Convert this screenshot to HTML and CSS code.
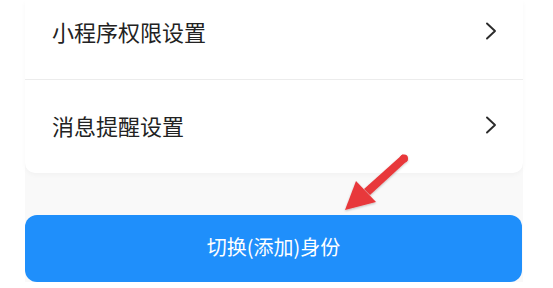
FILE: index.html
```html
<!DOCTYPE html>
<html lang="zh-CN">
<head>
<meta charset="utf-8">
<title>设置</title>
<link rel="stylesheet" href="styles.css">
</head>
<body>
<div class="screen">
  <div class="card">
    <div class="row row-first">
      <span class="label">小程序权限设置</span>
      <svg class="chev" width="12" height="18" viewBox="0 0 12 18"><path d="M2 1.5 L10 9 L2 16.5" fill="none" stroke="#2b2b2b" stroke-width="1.9" stroke-linecap="round" stroke-linejoin="round"/></svg>
    </div>
    <div class="row row-second">
      <span class="label">消息提醒设置</span>
      <svg class="chev" width="12" height="18" viewBox="0 0 12 18"><path d="M2 1.5 L10 9 L2 16.5" fill="none" stroke="#2b2b2b" stroke-width="1.9" stroke-linecap="round" stroke-linejoin="round"/></svg>
    </div>
  </div>
  <button class="switch-btn">切换(添加)身份</button>
</div>
<svg class="arrow" width="553" height="288" viewBox="0 0 553 288">
  <defs>
    <filter id="sh" x="-20%" y="-20%" width="140%" height="140%">
      <feDropShadow dx="0" dy="1" stdDeviation="1.2" flood-color="#000" flood-opacity="0.25"/>
    </filter>
  </defs>
  <g filter="url(#sh)" fill="#e8383a">
    <path d="M402.5 154.5 Q407.5 155.5 407.5 160.5 L370 195 L364 189 Z"/>
    <circle cx="404" cy="158.5" r="4"/>
    <polygon points="345,210 356,181 376,202"/>
  </g>
</svg>
</body>
</html>
```
FILE: styles.css
```css
html, body {
  margin: 0;
  padding: 0;
  background: #ffffff;
}
body {
  width: 553px;
  height: 288px;
  overflow: hidden;
  position: relative;
  font-family: "Noto Sans CJK SC", "Noto Sans", sans-serif;
}
.screen {
  width: 498px;
  margin-left: 25px;
  background: linear-gradient(#f3f3f3 0, #f9f9f9 60px);
  display: flex;
  flex-direction: column;
}
.card {
  background: #ffffff;
  border-radius: 0 0 10px 10px;
  box-shadow: 0 2px 5px rgba(0, 0, 0, 0.03);
  display: flex;
  flex-direction: column;
}
.row {
  height: 93px;
  display: flex;
  align-items: center;
  justify-content: space-between;
  padding: 0 26px 0 27px;
  box-sizing: border-box;
}
.row-first {
  height: 80px;
  padding-bottom: 18px;
  border-bottom: 1px solid #ececec;
}
.row-second {
  padding-bottom: 4px;
}
.label {
  font-size: 22px;
  color: #222222;
  line-height: 1;
}
.chev {
  display: block;
}
.switch-btn {
  margin-top: 42px;
  height: 67px;
  width: 497px;
  border: none;
  border-radius: 12px;
  background: #1f8ffb;
  color: #ffffff;
  font-family: "Noto Sans CJK SC", "Noto Sans", sans-serif;
  font-size: 20px;
  padding: 0 0 5px 0;
  cursor: pointer;
}
.arrow {
  position: absolute;
  left: 0;
  top: 0;
  pointer-events: none;
}
```
